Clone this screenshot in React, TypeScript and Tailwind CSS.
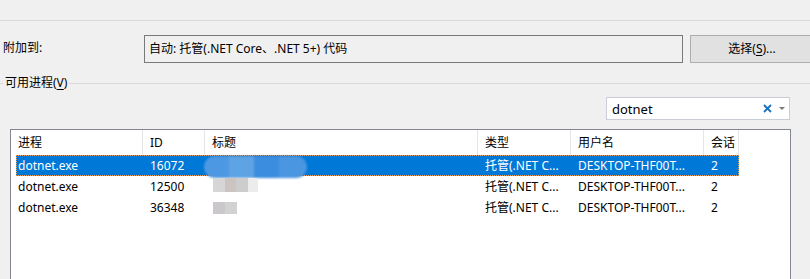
import type { ReactNode } from 'react'

const font = { fontFamily: '"Noto Sans", "Noto Sans CJK SC", sans-serif' }

type Row = {
  name: string
  id: string
  type: string
  user: string
  session: string
  selected?: boolean
  blur: ReactNode
}

const columns = [
  { label: '进程', w: 'w-[132px]' },
  { label: 'ID', w: 'w-[62px]' },
  { label: '标题', w: 'w-[273px]' },
  { label: '类型', w: 'w-[93px]' },
  { label: '用户名', w: 'w-[133px]' },
  { label: '会话', w: 'w-[35px]' },
]

const rows: Row[] = [
  {
    name: 'dotnet.exe',
    id: '16072',
    type: '托管(.NET C...',
    user: 'DESKTOP-THF00T...',
    session: '2',
    selected: true,
    blur: (
      <div className="absolute left-[-1px] top-[1px] flex h-[22px] w-[103px] overflow-hidden rounded-full blur-[1px]">
        <div className="h-full w-[25px] bg-[#4d98e2]" />
        <div className="h-full w-[25px] bg-[#5ea3e4]" />
        <div className="h-full w-[25px] bg-[#3b8ddf]" />
        <div className="h-full w-[28px] bg-[#4a96e1]" />
      </div>
    ),
  },
  {
    name: 'dotnet.exe',
    id: '12500',
    type: '托管(.NET C...',
    user: 'DESKTOP-THF00T...',
    session: '2',
    blur: (
      <div className="absolute left-[8px] top-[2px] flex h-[14px] blur-[0.5px]">
        <div className="h-full w-[12px] bg-[#d6d6d6]" />
        <div className="h-full w-[11px] bg-[#ccc4c0]" />
        <div className="h-full w-[12px] bg-[#cdcdcd]" />
        <div className="h-full w-[10px] bg-[#ececec]" />
      </div>
    ),
  },
  {
    name: 'dotnet.exe',
    id: '36348',
    type: '托管(.NET C...',
    user: 'DESKTOP-THF00T...',
    session: '2',
    blur: (
      <div className="absolute left-[8px] top-[5px] flex h-[12px]">
        <div className="h-full w-[12px] bg-[#cac8ca]" />
        <div className="h-full w-[12px] bg-[#d2d2d2]" />
      </div>
    ),
  },
]

function ProcessRow({ row }: { row: Row }) {
  return (
    <div
      className={
        row.selected
          ? 'ml-[5px] flex h-[21px] w-[723px] items-center bg-[#0078d7] text-white outline-1 outline-dotted outline-offset-[-1px] outline-[#e8a060]'
          : 'ml-[5px] flex h-[21px] w-[723px] items-center text-black'
      }
    >
      <div className="w-[127px] pl-[2px]">{row.name}</div>
      <div className="w-[62px] pl-[7px]">{row.id}</div>
      <div className="relative h-full w-[273px]">{row.blur}</div>
      <div className="w-[93px] truncate pl-[7px]">{row.type}</div>
      <div className="w-[133px] pl-[7px]">{row.user}</div>
      <div className="w-[35px] pl-[7px]">{row.session}</div>
    </div>
  )
}

export default function App() {
  return (
    <div
      className="h-[279px] w-[810px] overflow-hidden bg-[#f0f0f0] text-[12px] leading-[16px] text-black"
      style={font}
    >
      <div className="h-[21px] border-b border-[#dadada]" />

      {/* attach to */}
      <div className="mt-[14px] flex items-start">
        <div className="w-[144px] shrink-0 pl-[3px] pt-[5px]">附加到:</div>
        <div className="h-[28px] w-[539px] shrink-0 border border-[#7a7a7a] bg-[#f0f0f0] pl-[4px] pt-[5px]">
          自动: 托管(.NET Core、.NET 5+) 代码
        </div>
        <button
          type="button"
          className="ml-[7px] h-[28px] w-[124px] shrink-0 border border-[#adadad] bg-[#e1e1e1] text-center"
        >
          选择(<span className="underline underline-offset-2">S</span>)...
        </button>
      </div>

      {/* group box */}
      <div className="mt-[19px] flex h-[2px] items-center">
        <div className="h-px w-[3px] bg-[#dadada]" />
        <div className="px-[2px] leading-[14px]">
          可用进程(<span className="underline underline-offset-2">V</span>)
        </div>
        <div className="h-px flex-1 bg-[#dadada]" />
      </div>

      {/* search */}
      <div className="mt-[13px] flex justify-end pr-[20px]">
        <div className="flex h-[23px] w-[184px] items-center border border-[#cbcdd8] bg-white pl-[5px] pr-[4px]">
          <span className="flex-1 text-[13px]">dotnet</span>
          <svg width="9" height="9" viewBox="0 0 9 9" className="mr-[7px]">
            <path d="M1 1 L8 8 M8 1 L1 8" stroke="#1c6fc4" strokeWidth="1.8" />
          </svg>
          <svg width="6" height="4" viewBox="0 0 6 4">
            <path d="M0 0 L6 0 L3 3 Z" fill="#7a7a7a" />
          </svg>
        </div>
      </div>

      {/* process list */}
      <div className="ml-[10px] mt-[9px] h-[160px] w-[781px] border border-[#828790] bg-white">
        <div className="flex h-[25px]">
          {columns.map((c) => (
            <div key={c.label} className={`${c.w} flex items-center border-r border-[#e5e5e5] pl-[7px]`}>
              {c.label}
            </div>
          ))}
        </div>
        {rows.map((r) => (
          <ProcessRow key={r.id} row={r} />
        ))}
      </div>
    </div>
  )
}
